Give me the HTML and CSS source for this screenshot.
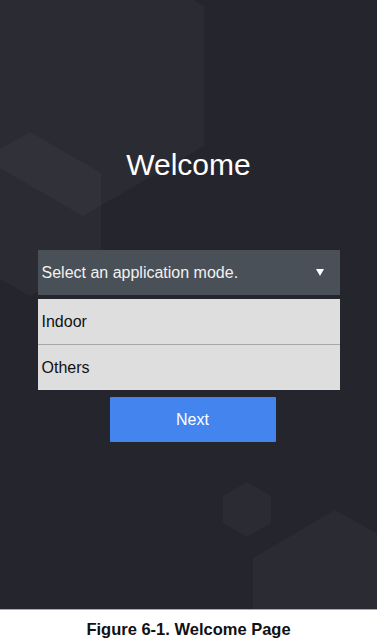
FILE: index.html
```html
<!DOCTYPE html>
<html lang="en">
<head>
  <meta charset="UTF-8">
  <title>Welcome</title>
  <meta name="viewport" content="width=device-width, initial-scale=1">
  <link rel="stylesheet" href="styles.css">
</head>
<body>
  <div class="screen">
    <svg class="bg" width="377" height="609" viewBox="0 0 377 609">
      <g fill="#ffffff" fill-opacity="0.03">
        <polygon points="83,-64 204,6 204,146 83,216 -38,146 -38,6"/>
        <polygon points="30,132 101,173 101,255 30,296 -41,255 -41,173"/>
        <polygon points="247,482 271,496 271,523 247,537 223,523 223,496"/>
        <polygon points="335,510 420,558 420,660 335,708 253,660 253,558"/>
      </g>
    </svg>
    <div class="content">
      <h1 class="title">Welcome</h1>
      <div class="select">
        <span>Select an application mode.</span>
        <span class="arrow"></span>
      </div>
      <ul class="options">
        <li>Indoor</li>
        <li>Others</li>
      </ul>
      <button class="next">Next</button>
    </div>
  </div>
  <div class="caption">Figure 6-1. Welcome Page</div>
</body>
</html>
```

FILE: styles.css
```css
body {
  margin: 0;
  padding: 0;
  background: #ffffff;
  font-family: "Liberation Sans", Arial, sans-serif;
}
.screen {
  position: relative;
  height: 609px;
  background-color: #25252d;
  border-bottom: 1px solid #a9a9a9;
  overflow: hidden;
}
.bg {
  position: absolute;
  left: 0;
  top: 0;
}
.content {
  position: relative;
  display: flex;
  flex-direction: column;
  align-items: center;
  padding-top: 148px;
}
.title {
  margin: 0;
  font-size: 30px;
  line-height: 34px;
  font-weight: normal;
  color: #ffffff;
}
.select {
  margin-top: 68px;
  width: 302px;
  height: 45px;
  box-sizing: border-box;
  padding: 0 16px 0 4px;
  display: flex;
  align-items: center;
  justify-content: space-between;
  background: #4a5057;
  color: #f2f2f2;
  font-size: 16px;
}
.arrow {
  width: 0;
  height: 0;
  border-left: 4px solid transparent;
  border-right: 4px solid transparent;
  border-top: 7px solid #ffffff;
}
.options {
  list-style: none;
  margin: 4px 0 0;
  padding: 0;
  width: 302px;
  background: #dedede;
}
.options li {
  height: 45px;
  display: flex;
  align-items: center;
  padding-left: 4px;
  font-size: 16px;
  color: #111111;
}
.options li + li {
  border-top: 1px solid #a8a8a8;
}
.next {
  margin: 7px 0 0 8px;
  width: 166px;
  height: 45px;
  border: none;
  border-radius: 1px;
  background: #4384ef;
  color: #ffffff;
  font-family: "Liberation Sans", Arial, sans-serif;
  font-size: 16px;
}
.caption {
  height: 32px;
  line-height: 38px;
  text-align: center;
  font-weight: bold;
  font-size: 16.5px;
  color: #111111;
}
```
